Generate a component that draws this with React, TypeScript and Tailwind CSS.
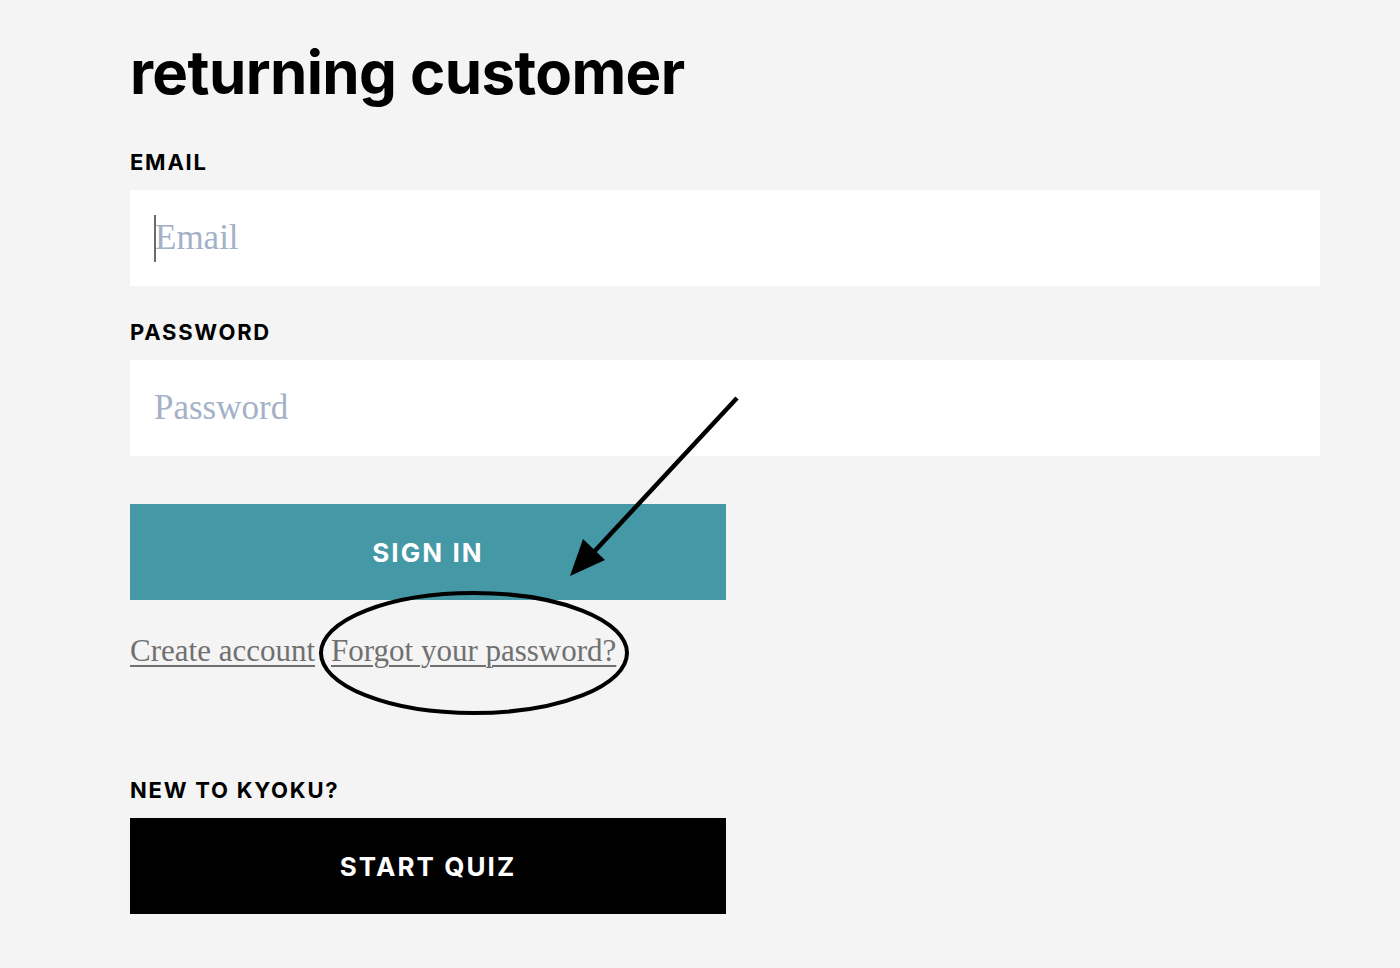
export default function App() {
    const sans = "font-['Inter','Liberation_Sans',sans-serif]";
    const serif = "font-['Liberation_Serif','DejaVu_Serif',serif]";

    return (
        <div className="min-h-[968px] w-full bg-[#f4f4f4] overflow-hidden">
            <div className="relative w-[1190px] ml-[130px] pt-[37px]">
                <h1 className={`${sans} text-[60px] leading-[70px] font-bold tracking-[-0.01em] text-black`}>
                    returning customer
                </h1>

                <form className="mt-[43px] flex flex-col" onSubmit={(e) => e.preventDefault()}>
                    <label className={`${sans} text-[22px] leading-[24px] font-bold tracking-[0.08em] text-black`}>EMAIL</label>
                    <div className="mt-[16px] h-[96px] bg-white flex items-center pl-[24px]">
                        <span className="w-[2px] h-[47px] bg-[#6b6b6b]" />
                        <input
                            placeholder="Email"
                            className={`${serif} flex-1 bg-transparent outline-none text-[35px] text-black placeholder:text-[#a4b1c6] -ml-[1px]`}
                        />
                    </div>

                    <label className={`${sans} mt-[34px] text-[22px] leading-[24px] font-bold tracking-[0.08em] text-black`}>PASSWORD</label>
                    <div className="mt-[16px] h-[96px] bg-white flex items-center pl-[24px]">
                        <input
                            type="password"
                            placeholder="Password"
                            className={`${serif} flex-1 bg-transparent outline-none text-[35px] text-black placeholder:text-[#a4b1c6]`}
                        />
                    </div>

                    <button className={`${sans} mt-[48px] w-[596px] h-[96px] bg-[#4598a5] text-white text-[26px] font-bold tracking-[0.08em]`}>
                        SIGN IN
                    </button>

                    <div className={`${serif} mt-[34px] flex gap-[16px] text-[31px] leading-[34px] text-[#707070]`}>
                        <a href="#" className="underline underline-offset-[4px] decoration-[1.5px]">Create account</a>
                        <a href="#" className="underline underline-offset-[4px] decoration-[1.5px]">Forgot your password?</a>
                    </div>

                    <p className={`${sans} mt-[110px] text-[22px] leading-[24px] font-bold tracking-[0.08em] text-black`}>NEW TO KYOKU?</p>
                    <button className={`${sans} mt-[16px] w-[596px] h-[96px] bg-black text-white text-[26px] font-bold tracking-[0.08em]`}>
                        START QUIZ
                    </button>
                </form>

                {/* annotation drawn over the form */}
                <svg className="absolute left-0 top-0 pointer-events-none" width="1190" height="968" viewBox="0 0 1190 968">
                    <ellipse cx="344" cy="653" rx="153" ry="60" fill="none" stroke="black" strokeWidth="4" />
                    <line x1="607" y1="398" x2="462" y2="554" stroke="black" strokeWidth="4.5" />
                    <polygon points="440,576 453,539 475,560" fill="black" />
                </svg>
            </div>
        </div>
    );
}
